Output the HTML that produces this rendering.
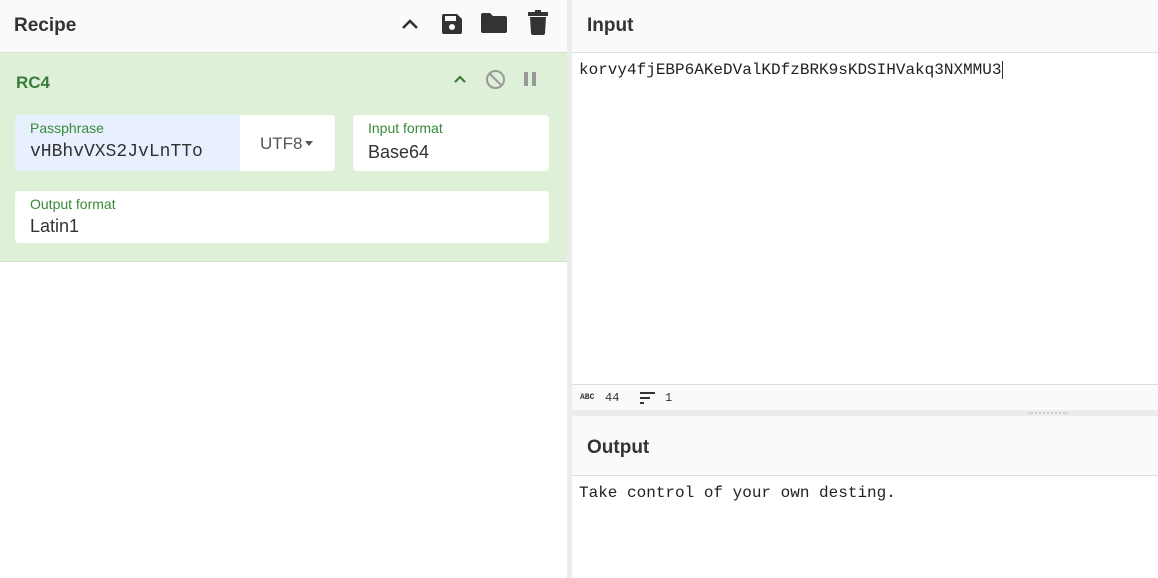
<!DOCTYPE html>
<html><head><style>
*{box-sizing:border-box;margin:0;padding:0}
body{width:1158px;height:578px;overflow:hidden;font-family:"Liberation Sans",sans-serif;background:#fff;position:relative}
.abs{position:absolute}
.hdr{background:#fafafa;border-bottom:1px solid #ddd;height:53px}
.title{font-weight:bold;font-size:19px;color:#333}
.mono{font-family:"Liberation Mono",monospace}
.box{background:#fff;border-radius:4px;position:absolute}
.lbl{position:absolute;left:15px;top:5px;font-size:14px;color:#3a8a3a}
.val{position:absolute;left:15px;font-size:18px;color:#333}
</style></head><body>
<!-- left -->
<div class="abs hdr" style="left:0;top:0;width:567px"></div>
<div class="abs title" style="left:14px;top:15px">Recipe</div>
<svg class="abs" style="left:400px;top:14px" width="20" height="20" viewBox="0 0 20 20"><path d="M3 14 L10 7 L17 14" fill="none" stroke="#333" stroke-width="2.6"/></svg>
<svg class="abs" style="left:440px;top:12px" width="24" height="24" viewBox="0 0 24 24"><path d="M2 4 a2 2 0 0 1 2-2 h13 l5 5 v13 a2 2 0 0 1-2 2 h-16 a2 2 0 0 1-2-2z" fill="#333"/><rect x="5" y="4" width="11" height="5" fill="#fafafa"/><circle cx="12" cy="15" r="3" fill="#fafafa"/></svg>
<svg class="abs" style="left:481px;top:12px" width="26" height="22" viewBox="0 0 26 22"><path d="M0 3 a2 2 0 0 1 2-2 h7 l3 3 h12 a2 2 0 0 1 2 2 v13 a2 2 0 0 1-2 2 h-22 a2 2 0 0 1-2-2z" fill="#333"/></svg>
<svg class="abs" style="left:527px;top:10px" width="22" height="25" viewBox="0 0 22 25"><rect x="1" y="2" width="20" height="4" fill="#333"/><rect x="8" y="0" width="6" height="3" fill="#333"/><path d="M3 7 h16 l-1 16 a2 2 0 0 1-2 2 h-10 a2 2 0 0 1-2-2z" fill="#333"/></svg>
<div class="abs" style="left:0;top:53px;width:567px;height:209px;background:#dff0d8;border-bottom:1px solid #cfe3c6"></div>
<div class="abs" style="left:16px;top:73px;font-weight:bold;font-size:17px;color:#3a7a3a">RC4</div>
<svg class="abs" style="left:452px;top:72px" width="16" height="14" viewBox="0 0 16 14"><path d="M3 10 L8 5 L13 10" fill="none" stroke="#3a7a3a" stroke-width="2.2"/></svg>
<svg class="abs" style="left:485px;top:69px" width="21" height="21" viewBox="0 0 21 21"><circle cx="10.5" cy="10.5" r="8.5" fill="none" stroke="#999" stroke-width="2"/><path d="M4.5 4.5 L16.5 16.5" stroke="#999" stroke-width="2"/></svg>
<div class="abs" style="left:524px;top:72px;width:4px;height:14px;background:#999"></div>
<div class="abs" style="left:532px;top:72px;width:4px;height:14px;background:#999"></div>
<div class="box" style="left:15px;top:115px;width:320px;height:56px;overflow:hidden">
 <div class="abs" style="left:0;top:0;width:225px;height:56px;background:#e8f0fe"></div>
 <div class="lbl">Passphrase</div>
 <div class="val mono" style="top:27px">vHBhvVXS2JvLnTTo</div>
 <div class="abs" style="left:245px;top:19px;font-size:17px;color:#555">UTF8</div>
 <div class="abs" style="left:290px;top:26px;border:4px solid transparent;border-top:5px solid #555"></div>
</div>
<div class="box" style="left:353px;top:115px;width:196px;height:56px">
 <div class="lbl">Input format</div>
 <div class="val" style="top:27px">Base64</div>
</div>
<div class="box" style="left:15px;top:191px;width:534px;height:52px">
 <div class="lbl">Output format</div>
 <div class="val" style="top:25px">Latin1</div>
</div>
<!-- divider -->
<div class="abs" style="left:567px;top:0;width:5px;height:578px;background:#ececec"></div>
<!-- right -->
<div class="abs hdr" style="left:572px;top:0;width:586px"></div>
<div class="abs title" style="left:587px;top:15px">Input</div>
<div class="abs mono" style="left:579px;top:61px;font-size:16px;color:#222">korvy4fjEBP6AKeDValKDfzBRK9sKDSIHVakq3NXMMU3<span style="border-left:1px solid #333;margin-left:1px"></span></div>
<div class="abs" style="left:572px;top:384px;width:586px;height:27px;background:#fafafa;border-top:1px solid #ddd"></div>
<div class="abs mono" style="left:580px;top:393px;font-size:8px;font-weight:bold;color:#333">ABC</div>
<div class="abs mono" style="left:605px;top:391px;font-size:12px;color:#333">44</div>
<svg class="abs" style="left:640px;top:392px" width="16" height="12" viewBox="0 0 16 12"><rect x="0" y="0" width="15" height="2" fill="#333"/><rect x="0" y="5" width="10" height="2" fill="#333"/><rect x="0" y="10" width="4" height="2" fill="#333"/></svg>
<div class="abs mono" style="left:665px;top:391px;font-size:12px;color:#333">1</div>
<div class="abs" style="left:572px;top:410px;width:586px;height:6px;background:#ececec"></div>
<div class="abs" style="left:1028px;top:412px;width:40px;border-top:2px dotted #ccc"></div>
<div class="abs hdr" style="left:572px;top:416px;width:586px;height:60px"></div>
<div class="abs title" style="left:587px;top:437px">Output</div>
<div class="abs mono" style="left:579px;top:484px;font-size:16px;color:#222">Take control of your own desting.</div>
</body></html>
